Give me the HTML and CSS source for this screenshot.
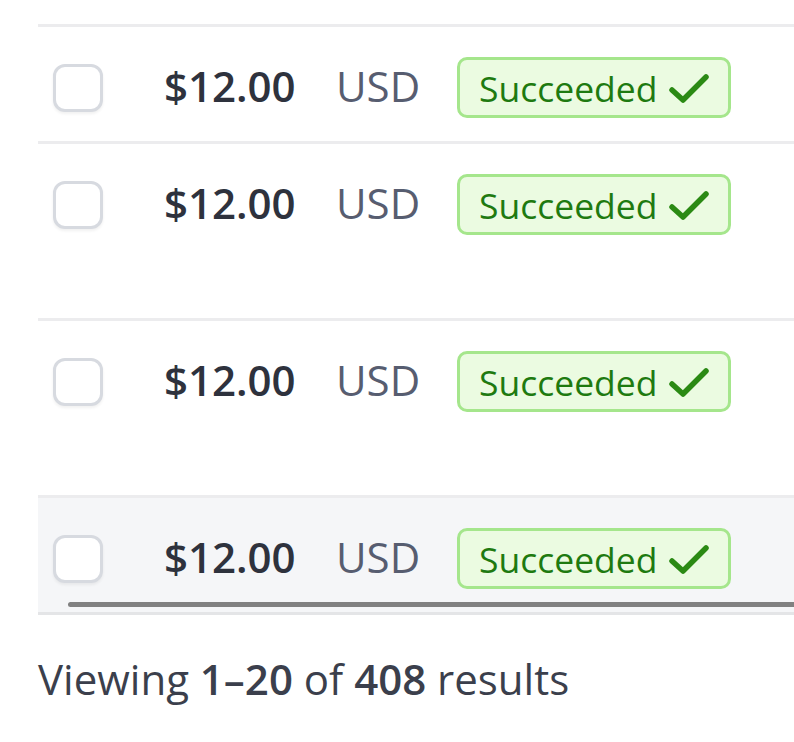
FILE: index.html
```html
<!DOCTYPE html>
<html>
<head>
<meta charset="utf-8">
<link rel="stylesheet" href="styles.css">
</head>
<body>
<div class="table-wrap">
  <div class="table">
    <div class="row">
      <div class="cell cb"><span class="checkbox"></span></div>
      <div class="cell amount">$12.00</div>
      <div class="cell currency">USD</div>
      <div class="cell status"><span class="badge">Succeeded<svg class="check" viewBox="0 0 40 32" width="40" height="32"><path d="M3 17 L14 27 L37 4" fill="none" stroke="#2b8a14" stroke-width="5.5" stroke-linecap="round" stroke-linejoin="round"/></svg></span></div>
    </div>
    <div class="row tall">
      <div class="cell cb"><span class="checkbox"></span></div>
      <div class="cell amount">$12.00</div>
      <div class="cell currency">USD</div>
      <div class="cell status"><span class="badge">Succeeded<svg class="check" viewBox="0 0 40 32" width="40" height="32"><path d="M3 17 L14 27 L37 4" fill="none" stroke="#2b8a14" stroke-width="5.5" stroke-linecap="round" stroke-linejoin="round"/></svg></span></div>
    </div>
    <div class="row tall">
      <div class="cell cb"><span class="checkbox"></span></div>
      <div class="cell amount">$12.00</div>
      <div class="cell currency">USD</div>
      <div class="cell status"><span class="badge">Succeeded<svg class="check" viewBox="0 0 40 32" width="40" height="32"><path d="M3 17 L14 27 L37 4" fill="none" stroke="#2b8a14" stroke-width="5.5" stroke-linecap="round" stroke-linejoin="round"/></svg></span></div>
    </div>
    <div class="row hover">
      <div class="cell cb"><span class="checkbox"></span></div>
      <div class="cell amount">$12.00</div>
      <div class="cell currency">USD</div>
      <div class="cell status"><span class="badge">Succeeded<svg class="check" viewBox="0 0 40 32" width="40" height="32"><path d="M3 17 L14 27 L37 4" fill="none" stroke="#2b8a14" stroke-width="5.5" stroke-linecap="round" stroke-linejoin="round"/></svg></span></div>
    </div>
  </div>
  <div class="scrollbar"></div>
</div>
<p class="footer">Viewing <b>1–20</b> of <b>408</b> results</p>
</body>
</html>
```
FILE: styles.css
```css
html, body {
  margin: 0;
  padding: 0;
  background: #ffffff;
  overflow: hidden;
}
body {
  font-family: "Open Sans", "Noto Sans", sans-serif;
  color: #30333f;
}
.table-wrap {
  position: relative;
  margin-left: 38px;
  margin-top: 24px;
  width: 800px;
}
.table {
  border-top: 3px solid #ececee;
}
.row {
  display: flex;
  align-items: flex-start;
  padding-top: 30px;
  height: 84px;
  border-bottom: 3px solid #ececee;
  box-sizing: content-box;
}
.row.tall {
  height: 144px;
}
.row.hover {
  background: #f5f6f8;
  border-bottom-color: #e4e5e7;
}
.cell {
  display: flex;
  align-items: center;
  height: 61px;
}
.cb {
  padding-left: 15px;
  width: 111px;
}
.checkbox {
  display: block;
  width: 44px;
  height: 42px;
  border: 3px solid #d7dae0;
  border-radius: 12px;
  background: #ffffff;
  box-shadow: 0 2px 3px rgba(0, 0, 0, 0.06);
}
.amount {
  font-weight: 600;
  font-size: 42px;
  color: #2e323d;
  width: 172px;
  margin-top: -2px;
}
.currency {
  font-size: 42px;
  color: #575d70;
  width: 121px;
  margin-top: -2px;
}
.badge {
  display: flex;
  align-items: center;
  box-sizing: border-box;
  height: 61px;
  width: 274px;
  padding-left: 19px;
  border: 3px solid #a5e68c;
  border-radius: 10px;
  background: #ebfbe1;
  color: #1e7a10;
  font-size: 35.5px;
}
.check {
  margin-left: 11px;
  margin-top: 2px;
  width: 40px;
  height: 32px;
}
.scrollbar {
  position: absolute;
  left: 30px;
  right: -20px;
  top: 578px;
  height: 5px;
  border-radius: 3px;
  background: #818181;
}
.footer {
  margin: 0;
  margin-top: 35px;
  margin-left: 38px;
  font-size: 42px;
  color: #3b3f4c;
}
.footer b {
  font-weight: 600;
}
```
